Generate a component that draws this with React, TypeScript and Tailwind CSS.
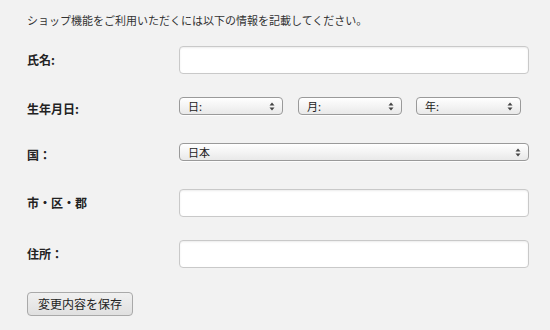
import React from 'react';

const font = { fontFamily: '"Noto Sans CJK JP", "Liberation Sans", sans-serif' };

const Arrows: React.FC = () => (
  <svg width="6" height="9" viewBox="0 0 6 9" className="shrink-0">
    <path d="M3 0.5 L5.5 3.5 H0.5 Z" fill="#444" />
    <path d="M3 8.5 L5.5 5.5 H0.5 Z" fill="#444" />
  </svg>
);

const Select: React.FC<{ label: string; width: string }> = ({ label, width }) => (
  <div
    role="combobox"
    className={`${width} flex h-[18px] items-center justify-between rounded-[4px] border border-[#9a9a9a] bg-gradient-to-b from-white to-[#e9e9e9] pl-[8px] pr-[7px] text-[11px] leading-none text-[#222] shadow-[0_1px_0_rgba(255,255,255,0.8)]`}
  >
    <span>{label}</span>
    <Arrows />
  </div>
);

const TextInput: React.FC = () => (
  <input
    type="text"
    className="h-[28px] w-[350px] shrink-0 rounded-[4px] border border-[#c9c9c9] bg-white shadow-[inset_0_1px_2px_rgba(0,0,0,0.08)] outline-none"
  />
);

const Label: React.FC<{ children: React.ReactNode; className?: string }> = ({ children, className }) => (
  <div className={`w-[152px] shrink-0 text-[12px] font-bold leading-[14px] text-[#222] ${className ?? ''}`}>{children}</div>
);

export default function App() {
  return (
    <div className="min-h-[330px] w-[550px] bg-[#f2f2f2] pl-[27px] pr-[20px] pt-[12px]" style={font}>
      <p className="text-[11px] leading-[16px] text-[#333]">
        ショップ機能をご利用いただくには以下の情報を記載してください。
      </p>

      <div className="mt-[18px] flex h-[28px] items-center">
        <Label>氏名:</Label>
        <TextInput />
      </div>

      <div className="mt-[23px] flex h-[18px] items-center">
        <Label className="mt-[6px]">生年月日:</Label>
        <div className="flex gap-[14px]">
          <Select label="日:" width="w-[104px]" />
          <div className="ml-[1px]">
            <Select label="月:" width="w-[104px]" />
          </div>
          <Select label="年:" width="w-[105px]" />
        </div>
      </div>

      <div className="mt-[28px] flex h-[18px] items-center">
        <Label className="mt-[6px]">国：</Label>
        <Select label="日本" width="w-[350px]" />
      </div>

      <div className="mt-[28px] flex h-[28px] items-center">
        <Label>市・区・郡</Label>
        <TextInput />
      </div>

      <div className="mt-[23px] flex h-[28px] items-center">
        <Label>住所：</Label>
        <TextInput />
      </div>

      <button
        type="button"
        className="mt-[24px] h-[24px] w-[106px] rounded-[4px] border border-[#a9a9a9] bg-gradient-to-b from-[#f0f0f0] to-[#e0e0e0] text-[12px] leading-none text-[#222]"
      >
        変更内容を保存
      </button>
    </div>
  );
}
